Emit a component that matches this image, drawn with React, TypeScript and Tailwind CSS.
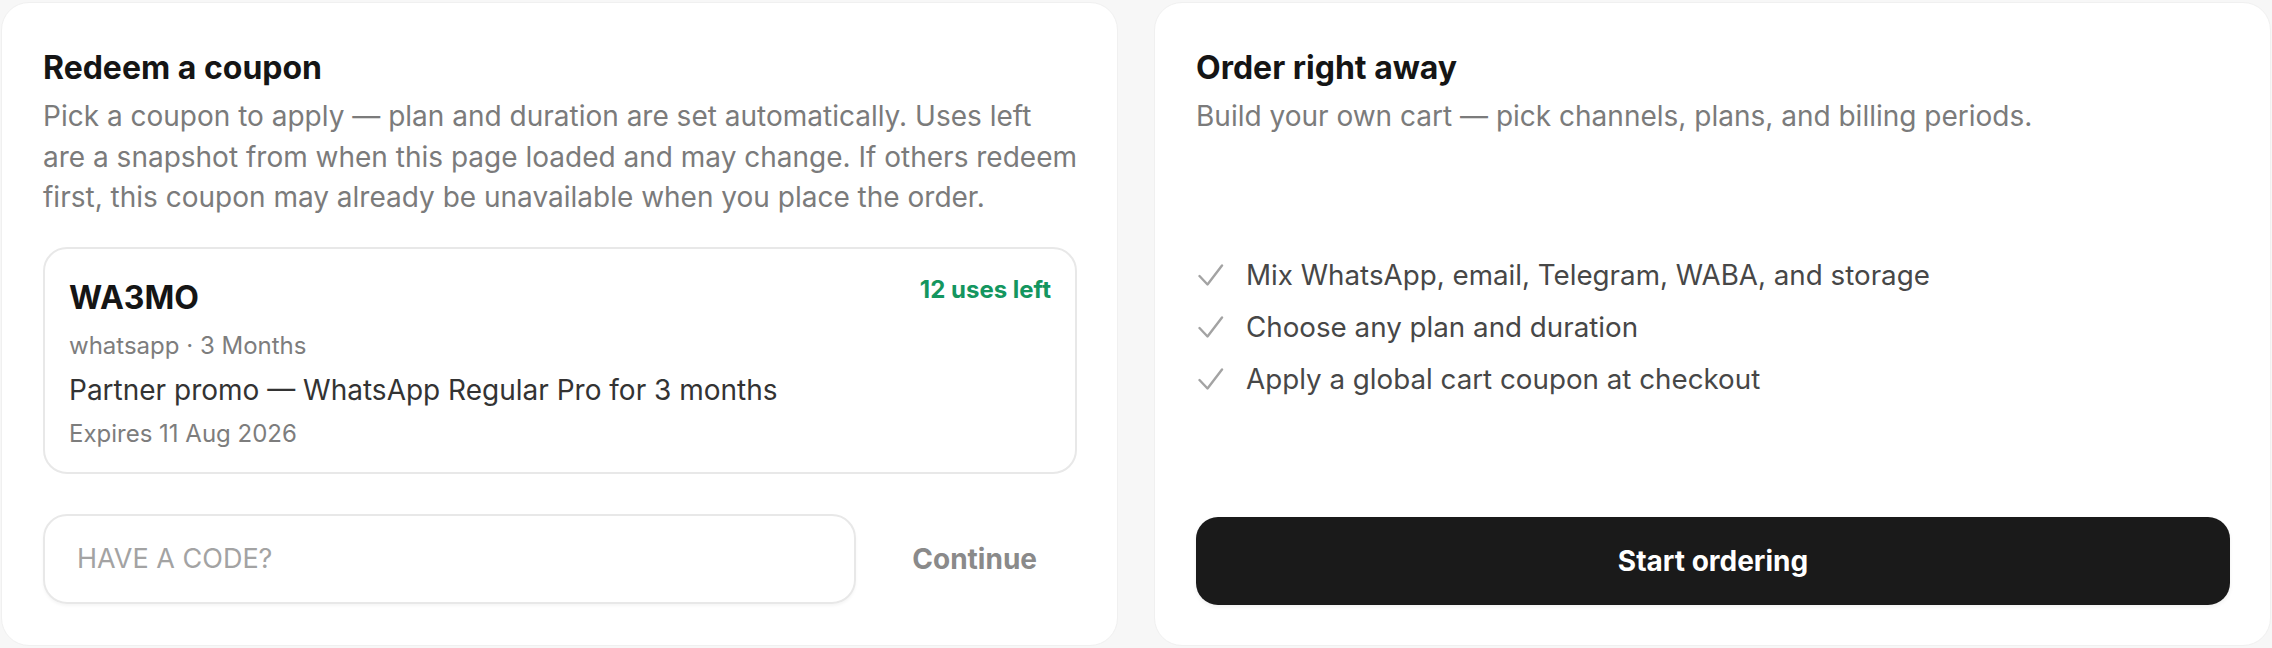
import React from "react";

function CheckIcon() {
  return (
    <svg width="26" height="24" viewBox="0 0 26 24" fill="none" className="shrink-0 ml-[2px]">
      <path d="M1.5 13 L9.5 21.5 L24 2.5" stroke="#a3a3a3" strokeWidth="2.4" strokeLinecap="round" strokeLinejoin="round" />
    </svg>
  );
}

export default function App() {
  const items = [
    "Mix WhatsApp, email, Telegram, WABA, and storage",
    "Choose any plan and duration",
    "Apply a global cart coupon at checkout",
  ];
  return (
    <div className="w-[2272px] h-[648px] bg-[#f7f7f7] grid grid-cols-2 gap-[36px] px-[1px] pt-[2px] pb-[2px] font-['Inter',sans-serif]">
      {/* Left card */}
      <div className="bg-white rounded-[28px] border border-[#f0f0f0] pl-[41px] pr-[40px] pt-[45px] pb-[38px] flex flex-col">
        <h2 className="text-[32px] leading-[40px] font-bold text-[#151515]">Redeem a coupon</h2>
        <p className="mt-2 text-[28px] leading-[40.5px] text-[#7b7b7b]">
          Pick a coupon to apply — plan and duration are set automatically. Uses left are a snapshot from when this page loaded and may change. If others redeem first, this coupon may already be unavailable when you place the order.
        </p>
        <div className="mt-[29px] border-2 border-[#e8e8e8] rounded-[24px] px-6 pt-[25px] pb-[22px]">
          <div className="flex justify-between items-start">
            <div className="text-[32px] leading-[48px] font-bold text-[#151515]">WA3MO</div>
            <div className="text-[24px] leading-[32px] font-bold text-[#14965f]">12 uses left</div>
          </div>
          <div className="mt-2 text-[24px] leading-[32px] text-[#7d7d7d]">whatsapp · 3 Months</div>
          <div className="mt-[10px] text-[28px] leading-[36px] text-[#333333]">Partner promo — WhatsApp Regular Pro for 3 months</div>
          <div className="mt-[10px] text-[24px] leading-[32px] text-[#7d7d7d]">Expires 11 Aug 2026</div>
        </div>
        <div className="mt-10 flex items-center gap-4">
          <input
            className="flex-1 min-w-0 h-[90px] border-2 border-[#e8e8e8] rounded-[24px] px-8 text-[27px] text-[#333] placeholder:text-[#a3a3a3] outline-none shadow-[0_2px_3px_rgba(0,0,0,0.04)]"
            placeholder="HAVE A CODE?"
          />
          <button className="px-10 text-[28px] leading-[36px] font-bold text-[#8a8a8a]">Continue</button>
        </div>
      </div>

      {/* Right card */}
      <div className="bg-white rounded-[28px] border border-[#f0f0f0] pl-[41px] pr-[40px] pt-[45px] pb-[40px] flex flex-col">
        <h2 className="text-[32px] leading-[40px] font-bold text-[#151515]">Order right away</h2>
        <p className="mt-2 text-[28px] leading-[40.5px] text-[#7b7b7b]">
          Build your own cart — pick channels, plans, and billing periods.
        </p>
        <div className="flex-1 flex flex-col justify-center gap-4">
          {items.map((t) => (
            <div key={t} className="flex items-center gap-[22px]">
              <CheckIcon />
              <span className="text-[27.75px] leading-[36px] text-[#474747]">{t}</span>
            </div>
          ))}
        </div>
        <button className="h-[88px] w-full rounded-[22px] bg-[#1a1a1a] text-white text-[28px] font-bold shadow-[0_2px_4px_rgba(0,0,0,0.06)]">
          Start ordering
        </button>
      </div>
    </div>
  );
}
